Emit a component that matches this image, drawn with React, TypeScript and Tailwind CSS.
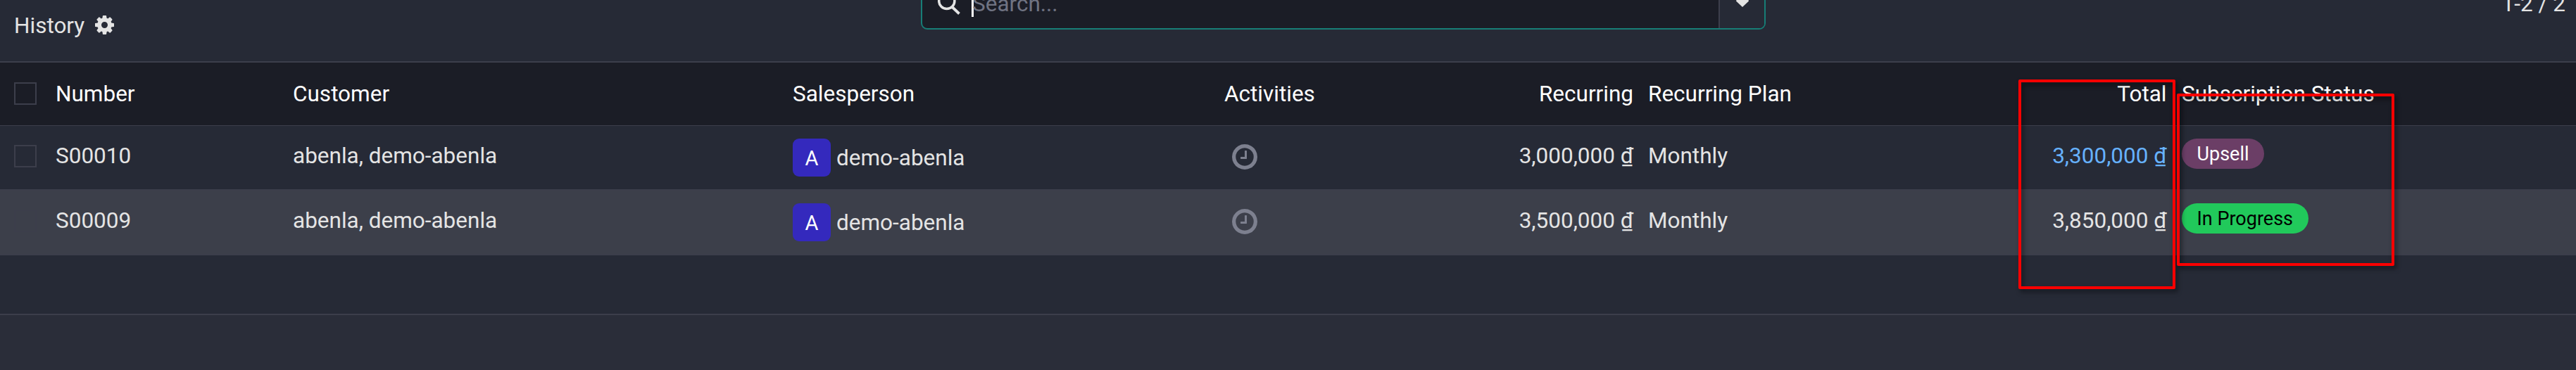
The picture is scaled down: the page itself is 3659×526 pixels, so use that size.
import React from "react";

const GEAR =
  "M1024 768q0-106-75-181t-181-75-181 75-75 181 75 181 181 75 181-75 75-181zm512-109v222q0 12-8 23t-20 13l-185 28q-19 54-39 91 35 50 107 138 10 12 10 25t-9 23q-27 37-99 108t-94 71q-12 0-26-9l-138-108q-44 23-91 38-16 136-29 186-7 28-36 28h-222q-14 0-24.500-8.500t-11.500-21.500l-28-184q-49-16-90-37l-141 107q-10 9-25 9-14 0-25-11-126-114-165-168-7-10-7-23 0-12 8-23 15-21 51-66.500t54-70.500q-27-50-41-99l-183-27q-13-2-21-12.500t-8-23.500v-222q0-12 8-23t19-13l186-28q14-46 39-92-40-57-107-138-10-12-10-24 0-10 9-23 26-36 98.500-107.500t94.500-71.500q13 0 26 10l138 107q44-23 91-38 16-136 29-186 7-28 36-28h222q14 0 24.500 8.500t11.500 21.500l28 184q49 16 90 37l142-107q9-9 24-9 13 0 25 10 129 119 165 170 7 8 7 22 0 12-8 23-15 21-51 66.500t-54 70.500q26 50 41 98l183 28q13 2 21 12.500t8 23.500z";
const CLOCK =
  "M896 416v448q0 14-9 23t-23 9h-320q-14 0-23-9t-9-23v-64q0-14 9-23t23-9h224v-352q0-14 9-23t23-9h64q14 0 23 9t9 23zm416 352q0-148-73-273t-198-198-273-73-273 73-198 198-73 273 73 273 198 198 273 73 273-73 198-198 73-273zm224 0q0 209-103 385.500t-279.500 279.500-385.500 103-385.500-103-279.500-279.500-103-385.500 103-385.500 279.500-279.500 385.500-103 385.500 103 279.500 279.500 103 385.500z";

const COLS =
  "grid grid-cols-[79px_337px_710px_613px_401px_201px_498px_260px_1fr]";

function Checkbox() {
  return <span className="block size-8 border-2 border-[#3c3e4b]" />;
}

function Row(props: {
  number: string;
  recurring: string;
  total: string;
  rowClass: string;
  totalClass: string;
  badge: string;
  badgeClass: string;
}) {
  return (
    <div className={`${COLS} h-[92px] shrink-0 border-b-2 border-[#3c3e4b] ${props.rowClass}`}>
      <div className="pl-5 pt-[27px]">
        <Checkbox />
      </div>
      <div className="pt-[24px]">{props.number}</div>
      <div className="pt-[24px]">abenla, demo-abenla</div>
      <div className="flex items-start pt-[18px]">
        <span className="flex h-[54px] w-[54px] items-center justify-center rounded-[9px] bg-[#3429bd] pt-[2px] text-[29px] text-white">
          A
        </span>
        <span className="ml-2 mt-[9px]">demo-abenla</span>
      </div>
      <div className="pl-[11px] pt-[26px]">
        <svg viewBox="0 0 1536 1536" className="size-9 fill-[#7d808f]">
          <path d={CLOCK} />
        </svg>
      </div>
      <div className="pr-[21px] pt-[24px] text-right">{props.recurring}</div>
      <div className="pt-[24px]">Monthly</div>
      <div className={`pr-[21.5px] pt-[24px] text-right ${props.totalClass}`}>{props.total}</div>
      <div className="flex items-start pt-[18px]">
        <span
          className={`flex h-[43px] items-center rounded-full px-[21.5px] text-[27px] ${props.badgeClass}`}
        >
          {props.badge}
        </span>
      </div>
    </div>
  );
}

export default function App() {
  return (
    <div className="relative flex h-[526px] w-[3659px] flex-col overflow-hidden bg-[#262a36] font-['Roboto',sans-serif] text-[31.5px] leading-[38px] text-[#e4e4e4]">
      <header className="flex h-[89px] shrink-0 items-start border-b-2 border-[#3c3e4b]">
        <div className="flex w-[1308px] items-start pl-5 pt-[18px]">
          <span>History</span>
          <svg viewBox="0 0 1536 1536" className="ml-[15px] mt-[4px] size-[27px] fill-[#e4e4e4]">
            <path fillRule="evenodd" d={GEAR} />
          </svg>
        </div>
        <div className="-mt-[24px] flex h-[66px] w-[1200px] overflow-hidden rounded-[9px] border-2 border-[#177d76] bg-[#1b1d26]">
          <svg viewBox="0 0 32 32" className="ml-[22px] mt-[12px] size-8 shrink-0 fill-none stroke-[#e4e4e4]">
            <circle cx="12.8" cy="11.5" r="11.1" strokeWidth="3.5" />
            <path d="M20.500 20 L30.500 29.500" strokeWidth="3.800" />
          </svg>
          <span className="ml-[16px] mt-[4px] h-[42px] w-[3px] shrink-0 bg-white" />
          <span className="-ml-[2px] mt-[9px] flex-1 text-[#6f7382]">Search...</span>
          <div className="flex w-[65px] justify-center border-l-2 border-[#3c3e4b] bg-[#262a36]">
            <svg viewBox="0 0 18 10" className="mt-[22px] h-[10px] w-[18px] fill-[#e4e4e4]">
              <path d="M0.500 0h17L18 1.500L9 10L0 1.500z" />
            </svg>
          </div>
        </div>
        <div className="-mt-[13px] flex-1 pr-[15px] text-right">1-2 / 2</div>
      </header>

      <div className={`${COLS} h-[90px] shrink-0 border-b border-[#3c3e4b] bg-[#1b1d26] pt-[26px] text-white`}>
        <div className="pl-5 pt-[2px]">
          <Checkbox />
        </div>
        <div>Number</div>
        <div>Customer</div>
        <div>Salesperson</div>
        <div>Activities</div>
        <div className="pr-[21px] text-right">Recurring</div>
        <div>Recurring Plan</div>
        <div className="pr-[21.5px] text-right">Total</div>
        <div>Subscription Status</div>
      </div>

      <Row
        number="S00010"
        recurring="3,000,000 ₫"
        total="3,300,000 ₫"
        rowClass=""
        totalClass="text-[#66b2ff]"
        badge="Upsell"
        badgeClass="bg-[#6b3e66] text-white"
      />
      <Row
        number="S00009"
        recurring="3,500,000 ₫"
        total="3,850,000 ₫"
        rowClass="bg-[#3c3f4a]"
        totalClass=""
        badge="In Progress"
        badgeClass="bg-[#21c95b] text-black"
      />
      <div className="h-[83px] shrink-0" />
      <div className="flex-1 border-t-2 border-[#3c3e4b] bg-[#2a2d39]" />

      <div className="absolute left-[2867px] top-[113px] h-[298px] w-[223px] rounded-[2px] border-4 border-[#ff0000] drop-shadow-[3px_4px_3px_rgba(0,0,0,0.5)]" />
      <div className="absolute left-[3092px] top-[133px] h-[245px] w-[309px] rounded-[2px] border-4 border-[#ff0000] drop-shadow-[3px_4px_3px_rgba(0,0,0,0.5)]" />
    </div>
  );
}
